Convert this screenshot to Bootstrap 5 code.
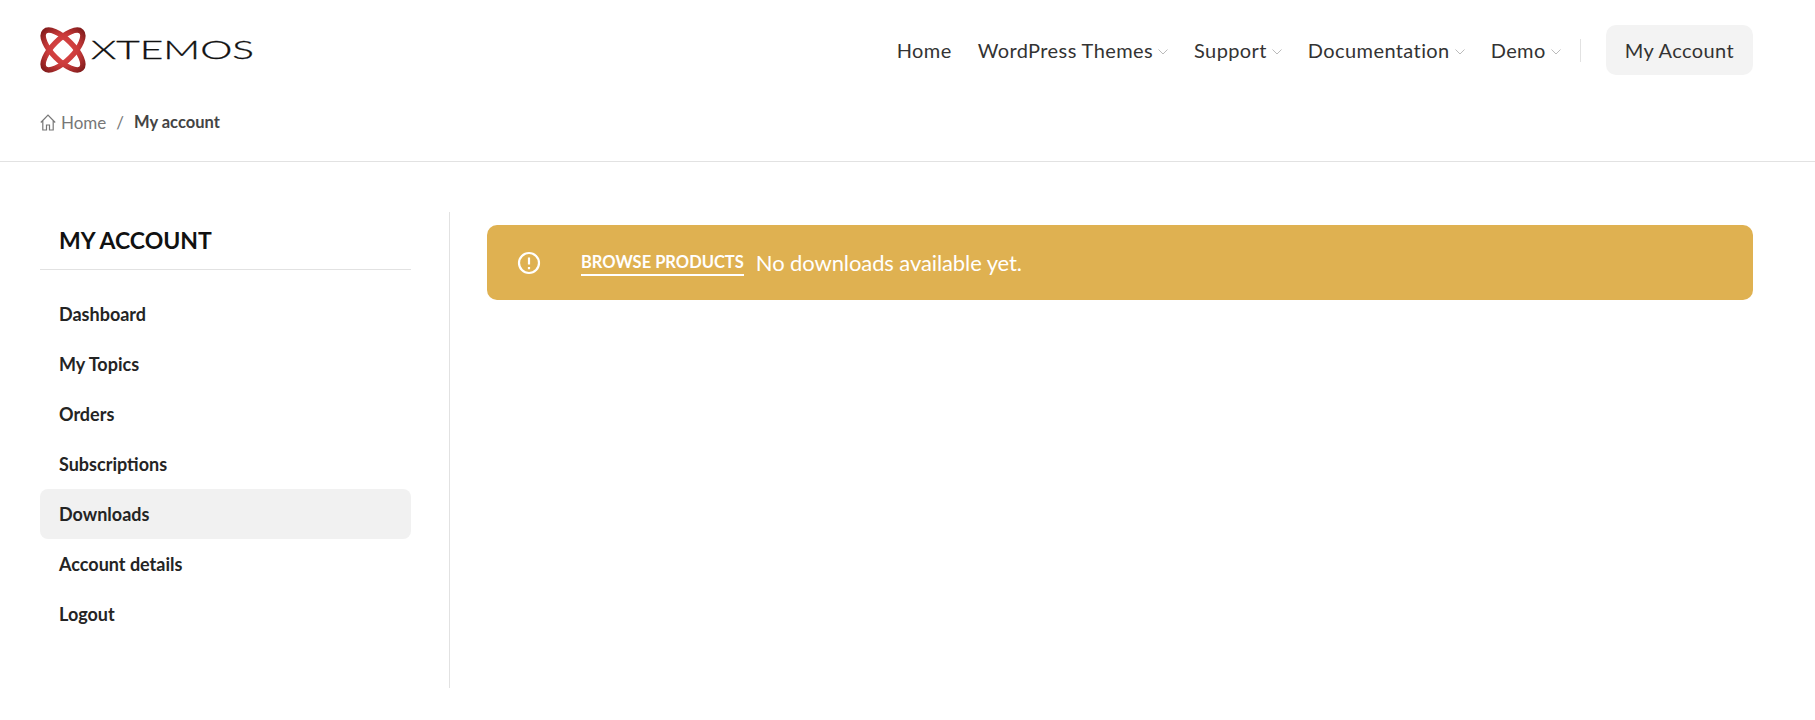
<!doctype html>
<html lang="en"><head><meta charset="utf-8">
<link href="https://cdn.jsdelivr.net/npm/bootstrap@5.3.0/dist/css/bootstrap.min.css" rel="stylesheet">
<style>
body{font-family:Lato,"Liberation Sans",sans-serif;color:#242424;background:#fff;height:720px;overflow:hidden}
.site-head{height:162px;border-bottom:1px solid #e2e2e2;padding:0 62px 0 40px}
.head-row{height:100px}
.logo-word{font-family:Lato,"Liberation Sans",sans-serif;font-size:26px;font-weight:300;fill:#111;stroke:#111;stroke-width:.3px}
.head-nav{gap:26px}
.main-link{font-size:20px;letter-spacing:.4px;color:#333;text-decoration:none;display:flex;align-items:center}
.caret-ic{width:10px;height:6px;margin-left:5px;margin-top:3px}
.sep-line{width:1px;height:23px;background:#e2e2e2;margin-left:-7px;margin-right:-1px}
.acct-btn{height:50px;padding:0 19px;font-size:20px;letter-spacing:.4px;color:#333;background:#f3f3f3;border-radius:10px;text-decoration:none;display:flex;align-items:center}
.crumbs{font-size:17px;color:#777;margin-top:10px}
.crumbs-home{margin-left:1px}
.crumbs-sep{margin:0 6px}
.crumbs strong{color:#444;font-weight:700;font-size:16.5px}
.body-wrap{padding:50px 62px 0 40px;gap:36px}
.side-col{width:371px;flex:none;height:476px}
.side-title{font-size:23px;font-weight:700;color:#111;padding:0 19px;border-bottom:1px solid #e2e2e2;margin:12px 0 19px;line-height:32px;height:46px;box-sizing:border-box}
.side-item{height:50px;display:flex;align-items:center;padding:0 19px;font-size:18px;font-weight:700;color:#242424;text-decoration:none;border-radius:8px}
.side-item.on{background:#f1f1f1}
.rule-v{width:1px;height:476px;background:#e2e2e2;flex:none;margin-left:2px}
.notice-box{flex:1;height:75px;margin-top:13px;margin-left:1px;background:#dfb151;border-radius:10px;color:#fff;display:flex;align-items:center;padding:0 30px}
.notice-ic{width:24px;height:24px;margin-right:40px}
.notice-link{font-size:16.5px;font-weight:700;color:#fff;text-decoration:none;border-bottom:2px solid #fff;margin-right:12px;line-height:24px}
.notice-txt{font-size:22px;letter-spacing:-.1px}
</style></head><body>
<header class="site-head">
<div class="head-row d-flex align-items-center justify-content-between">
<a class="d-flex align-items-center text-decoration-none" href="#">
<svg width="214" height="46" viewBox="0 0 214 46" fill="none"><defs><radialGradient id="lg" gradientUnits="userSpaceOnUse" cx="23" cy="23" r="29"><stop offset="0" stop-color="#e04a4a"/><stop offset=".55" stop-color="#c93a3a"/><stop offset="1" stop-color="#7d1a1a"/></radialGradient></defs><g stroke="url(#lg)" stroke-width="5.500"><ellipse cx="23" cy="23" rx="26" ry="10.500" transform="rotate(45 23 23)"/><ellipse cx="23" cy="23" rx="26" ry="10.500" transform="rotate(-45 23 23)"/></g><text class="logo-word" x="51" y="32" textLength="163" lengthAdjust="spacingAndGlyphs">XTEMOS</text></svg></a>
<nav class="head-nav d-flex align-items-center">
<a class="main-link" href="#">Home</a>
<a class="main-link" href="#">WordPress Themes<svg class="caret-ic" viewBox="0 0 10 6" fill="none" stroke="#bbb"><path d="M.5.5l4.5 4.5 4.5-4.500"/></svg></a>
<a class="main-link" href="#">Support<svg class="caret-ic" viewBox="0 0 10 6" fill="none" stroke="#bbb"><path d="M.5.5l4.5 4.5 4.5-4.500"/></svg></a>
<a class="main-link" href="#">Documentation<svg class="caret-ic" viewBox="0 0 10 6" fill="none" stroke="#bbb"><path d="M.5.5l4.5 4.5 4.5-4.500"/></svg></a>
<a class="main-link" href="#">Demo<svg class="caret-ic" viewBox="0 0 10 6" fill="none" stroke="#bbb"><path d="M.5.5l4.5 4.5 4.5-4.500"/></svg></a>
<span class="sep-line"></span>
<a class="acct-btn" href="#">My Account</a>
</nav></div>
<div class="crumbs d-flex align-items-center gap-1">
<svg width="16" height="17" viewBox="0 0 16 17" fill="none" stroke="#777" stroke-width="1.2"><path d="M.8 8.500L8 1.200l7.200 7.300M2.800 6.800V16h3.700v-5h3v5h3.700V6.800"/></svg>
<span class="crumbs-home">Home</span><span class="crumbs-sep">/</span><strong>My account</strong></div>
</header>
<div class="body-wrap d-flex">
<aside class="side-col"><div class="side-title">MY ACCOUNT</div>
<a class="side-item" href="#">Dashboard</a><a class="side-item" href="#">My Topics</a><a class="side-item" href="#">Orders</a><a class="side-item" href="#">Subscriptions</a><a class="side-item on" href="#">Downloads</a><a class="side-item" href="#">Account details</a><a class="side-item" href="#">Logout</a></aside>
<div class="rule-v"></div>
<main class="notice-box">
<svg class="notice-ic" viewBox="0 0 24 24" fill="none" stroke="#fff" stroke-width="2.200"><circle cx="12" cy="12" r="10"/><path d="M12 6.500v7M12 16v2.200"/></svg>
<a class="notice-link" href="#">BROWSE PRODUCTS</a><span class="notice-txt">No downloads available yet.</span>
</main></div>
<script src="https://cdn.jsdelivr.net/npm/bootstrap@5.3.0/dist/js/bootstrap.bundle.min.js"></script>
</body></html>
